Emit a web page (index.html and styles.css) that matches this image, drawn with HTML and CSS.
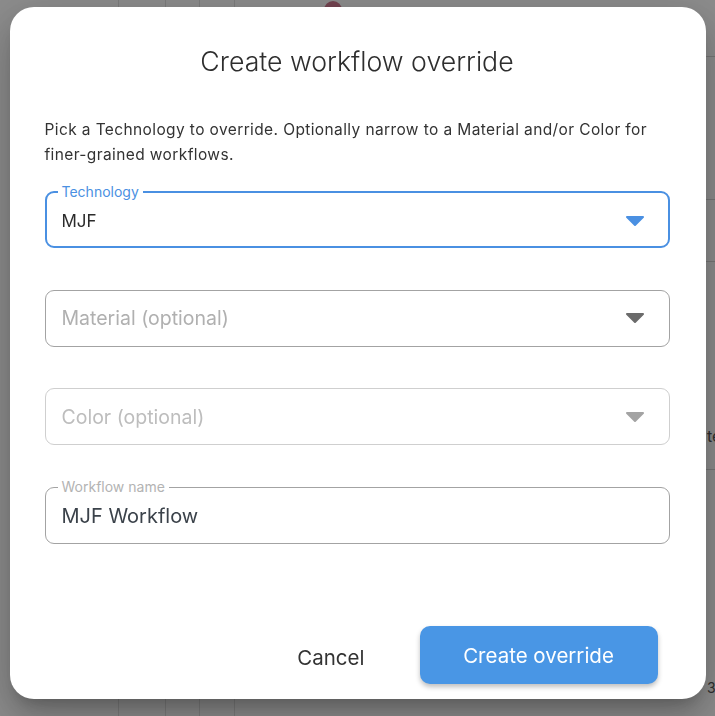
FILE: index.html
```html
<!DOCTYPE html>
<html lang="en">
<head>
    <meta charset="UTF-8">
    <meta name="viewport" content="width=device-width, initial-scale=1.0">
    <title>Create workflow override</title>
    <link rel="stylesheet" href="styles.css">
</head>
<body>
    <!-- Página por trás do modal -->
    <div class="page">
        <div class="page-col col-a"></div>
        <div class="page-col col-b"></div>
        <div class="page-col col-c"></div>
        <div class="page-col col-d"></div>
        <div class="page-main">
            <span class="avatar"></span>
        </div>
        <div class="page-side">
            <div class="side-row" style="height: 57px"></div>
            <div class="side-row" style="height: 143px"></div>
            <div class="side-row" style="height: 62px"></div>
            <div class="side-row side-text" style="height: 208px">te</div>
            <div class="side-row side-num">3</div>
        </div>
    </div>

    <div class="backdrop">
        <div class="dialog" role="dialog">
            <h2 class="dialog-title">Create workflow override</h2>
            <p class="dialog-text">Pick a Technology to override. Optionally narrow to a Material and/or Color for <span class="nowrap">finer-grained</span> workflows.</p>

            <div class="fields">
                <div class="field field-focused">
                    <span class="field-label">Technology</span>
                    <span class="field-value">MJF</span>
                    <svg class="field-arrow" viewBox="0 0 20 12"><path d="M2 2 H18 L10 10 Z"/></svg>
                </div>

                <div class="field">
                    <span class="field-placeholder">Material (optional)</span>
                    <svg class="field-arrow" viewBox="0 0 20 12"><path d="M2 2 H18 L10 10 Z"/></svg>
                </div>

                <div class="field field-disabled">
                    <span class="field-placeholder">Color (optional)</span>
                    <svg class="field-arrow" viewBox="0 0 20 12"><path d="M2 2 H18 L10 10 Z"/></svg>
                </div>

                <div class="field">
                    <span class="field-label">Workflow name</span>
                    <span class="field-value field-value-lg">MJF Workflow</span>
                </div>
            </div>

            <div class="dialog-actions">
                <button type="button" class="btn-text">Cancel</button>
                <button type="button" class="btn-primary">Create override</button>
            </div>
        </div>
    </div>
</body>
</html>
```

FILE: styles.css
```css
body {
    margin: 0;
    font-family: Inter, "Noto Sans", Arial, sans-serif;
    background-color: #fff;
    overflow: hidden;
}

/* pagina de fundo */
.page {
    display: flex;
    height: 716px;
}
.page-col {
    border-right: 1px solid #e2e2e2;
}
.col-a { width: 118px; }
.col-b { width: 46px; }
.col-c { width: 33px; }
.col-d { width: 34px; }
.page-main {
    flex: 1;
    padding-left: 89px;
}
.avatar {
    display: block;
    width: 18px;
    height: 18px;
    margin-top: 1px;
    border-radius: 50%;
    background-color: #d07a90;
}
.page-side {
    width: 10px;
    display: flex;
    flex-direction: column;
}
.side-row {
    border-bottom: 1px solid #d6d6d6;
    box-sizing: border-box;
    flex-shrink: 0;
}
.side-text {
    padding-top: 164px;
    padding-left: 2px;
    font-size: 16px;
    line-height: 20px;
    color: #555;
    white-space: nowrap;
}
.side-num {
    border: none;
    padding-top: 210px;
    padding-left: 2px;
    font-size: 14px;
    line-height: 16px;
    color: #555;
}

/* modal */
.backdrop {
    position: fixed;
    inset: 0;
    background-color: rgba(0, 0, 0, 0.45);
    display: flex;
    justify-content: center;
    align-items: flex-start;
    padding-top: 7px;
}
.dialog {
    width: 696px;
    height: 692px;
    box-sizing: border-box;
    padding: 37px 36px 15px 35px;
    background-color: #fff;
    border-radius: 24px;
    display: flex;
    flex-direction: column;
    box-shadow: 0 11px 15px -7px rgba(0, 0, 0, 0.2), 0 24px 38px 3px rgba(0, 0, 0, 0.14), 0 9px 46px 8px rgba(0, 0, 0, 0.12);
}
.dialog-title {
    margin: 0;
    font-size: 26.7px;
    font-weight: 300;
    line-height: 34px;
    text-align: center;
    color: #2e2e2e;
}
.dialog-text {
    margin: 39px 0 0;
    font-size: 15.5px;
    line-height: 25px;
    letter-spacing: 0.025em;
    color: #333;
}
.nowrap {
    white-space: nowrap;
}

.fields {
    margin-top: 24px;
    display: flex;
    flex-direction: column;
    gap: 41.5px;
}
.field {
    position: relative;
    height: 57px;
    box-sizing: border-box;
    border: 1px solid #a3a3a3;
    border-radius: 9px;
    padding: 0 24px 0 16px;
    display: flex;
    align-items: center;
}
.field-focused {
    border: 2px solid #4a90e2;
    padding: 2px 23px 0 15px;
}
.field-disabled {
    border-color: #cfcfcf;
}
.field-label {
    position: absolute;
    top: -10px;
    left: 12px;
    padding: 0 4px;
    background-color: #fff;
    font-size: 14px;
    line-height: 18px;
    color: #b3b3b3;
}
.field-focused .field-label {
    left: 11px;
    color: #4a90e2;
}
.field-value {
    flex: 1;
    font-size: 17px;
    color: #2b2b2b;
}
.field-value-lg {
    font-size: 20px;
    color: #3b424a;
    padding-top: 2px;
}
.field-placeholder {
    flex: 1;
    font-size: 19.5px;
    color: #b0b0b0;
}
.field-disabled .field-placeholder {
    color: #bdbdbd;
}
.field-arrow {
    width: 20px;
    height: 12px;
    fill: #6b6b6b;
    stroke: #6b6b6b;
    stroke-width: 2;
    stroke-linejoin: round;
}
.field-focused .field-arrow {
    fill: #4a90e2;
    stroke: #4a90e2;
}
.field-disabled .field-arrow {
    fill: #a3a3a3;
    stroke: #a3a3a3;
}

.dialog-actions {
    margin-top: auto;
    padding-right: 12px;
    display: flex;
    justify-content: flex-end;
    align-items: center;
    gap: 27px;
}
.dialog-actions button {
    font-family: inherit;
    font-size: 20.5px;
    border: none;
    cursor: pointer;
}
.btn-text {
    background: none;
    color: #333;
    padding: 4px 28px 0;
    height: 58px;
}
.btn-primary {
    width: 238px;
    height: 58px;
    background-color: #4996e5;
    color: #fff;
    border-radius: 10px;
    box-shadow: 0 3px 5px rgba(0, 0, 0, 0.25);
}
```
